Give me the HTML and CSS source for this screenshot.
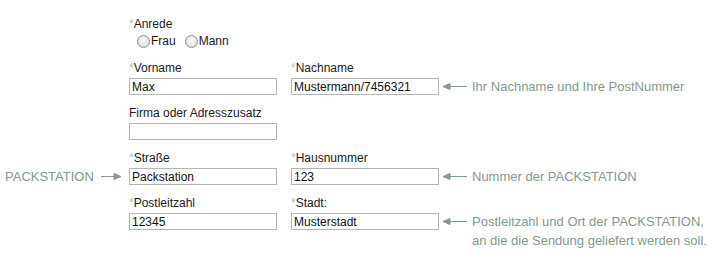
FILE: index.html
```html
<!DOCTYPE html>
<html lang="de">
<head>
  <meta charset="UTF-8">
  <title>Lieferadresse – Packstation</title>
  <link rel="stylesheet" href="styles.css">
</head>
<body>

  <form class="address">

    <!-- Anrede -->
    <div class="group salutation">
      <label class="label f1"><span class="req">*</span>Anrede</label>
      <div class="radios f1">
        <label><input type="radio" name="anrede" value="frau">Frau</label>
        <label><input type="radio" name="anrede" value="mann">Mann</label>
      </div>
    </div>

    <!-- Name -->
    <div class="group">
      <label class="label f1"><span class="req">*</span>Vorname</label>
      <label class="label f2"><span class="req">*</span>Nachname</label>
      <input class="f1" type="text" value="Max">
      <input class="f2" type="text" value="Mustermann/7456321">
      <div class="hint">
        <svg class="arrow" width="24" height="9" viewBox="0 0 24 9"><polygon points="0,4.5 7,1.5 7,7.5"/><line x1="6" y1="4.5" x2="24" y2="4.5"/></svg>
        <span>Ihr Nachname und Ihre PostNummer</span>
      </div>
    </div>

    <!-- Firma -->
    <div class="group">
      <label class="label f1">Firma oder Adresszusatz</label>
      <input class="f1" type="text" value="">
    </div>

    <!-- Straße -->
    <div class="group">
      <label class="label f1"><span class="req">*</span>Straße</label>
      <label class="label f2"><span class="req">*</span>Hausnummer</label>
      <div class="side">
        <span>PACKSTATION</span>
        <svg class="arrow" width="20" height="9" viewBox="0 0 20 9"><line x1="0" y1="4.5" x2="14" y2="4.5"/><polygon points="20,4.5 13,1.5 13,7.5"/></svg>
      </div>
      <input class="f1" type="text" value="Packstation">
      <input class="f2" type="text" value="123">
      <div class="hint">
        <svg class="arrow" width="24" height="9" viewBox="0 0 24 9"><polygon points="0,4.5 7,1.5 7,7.5"/><line x1="6" y1="4.5" x2="24" y2="4.5"/></svg>
        <span>Nummer der PACKSTATION</span>
      </div>
    </div>

    <!-- Ort -->
    <div class="group">
      <label class="label f1"><span class="req">*</span>Postleitzahl</label>
      <label class="label f2"><span class="req">*</span>Stadt:</label>
      <input class="f1" type="text" value="12345">
      <input class="f2" type="text" value="Musterstadt">
      <div class="hint multi">
        <svg class="arrow" width="24" height="9" viewBox="0 0 24 9"><polygon points="0,4.5 7,1.5 7,7.5"/><line x1="6" y1="4.5" x2="24" y2="4.5"/></svg>
        <span>Postleitzahl und Ort der PACKSTATION,<br>an die die Sendung geliefert werden soll.</span>
      </div>
    </div>

  </form>

</body>
</html>
```

FILE: styles.css
```css
html, body { min-height: 261px; }
body { margin: 0; padding: 17px 0 30px; box-sizing: border-box; background: #fff; font-family: "Liberation Sans", Arial, sans-serif; font-size: 12px; color: #1a1a1a; }

.group { display: grid; grid-template-columns: 129px 162px 152px auto; grid-template-rows: 14px 17px; row-gap: 3px; margin-bottom: 11px; }
.group.salutation { grid-template-rows: 14px 16px; row-gap: 2px; margin-bottom: 12px; }

.label { line-height: 14px; white-space: nowrap; grid-row: 1; }
.req { color: #b3bfba; }
.f1 { grid-column: 2; }
.f2 { grid-column: 3; }

input[type="text"] { grid-row: 2; box-sizing: border-box; width: 148px; height: 17px; margin: 0; padding: 0 2px; border: 1px solid #b4b4b4; font: 12px "Liberation Sans", Arial, sans-serif; color: #111; background: #fff; }

.radios { grid-row: 2; display: flex; align-items: center; padding-left: 8px; line-height: 16px; }
.radios label { display: flex; align-items: center; margin-right: 9px; }
.radios input { appearance: none; width: 13px; height: 13px; margin: 0 1px 0 0; border: 1px solid #8f8f8f; border-radius: 50%; background: radial-gradient(circle at 50% 40%, #fbfbfb 0, #e4e4e4 60%, #cfcfcf 100%); }

.side { grid-row: 2; grid-column: 1; display: flex; align-items: center; padding-left: 5px; gap: 7px; font-size: 13px; color: #82998f; }
.hint { grid-row: 2; grid-column: 4; display: flex; align-items: center; gap: 5px; font-size: 13px; color: #82998f; white-space: nowrap; }
.hint.multi { align-self: start; align-items: flex-start; line-height: 19px; margin-top: -1px; }
.hint.multi .arrow { margin-top: 5px; }

.arrow { flex: none; fill: #82998f; stroke: #82998f; stroke-width: 1; }
```
